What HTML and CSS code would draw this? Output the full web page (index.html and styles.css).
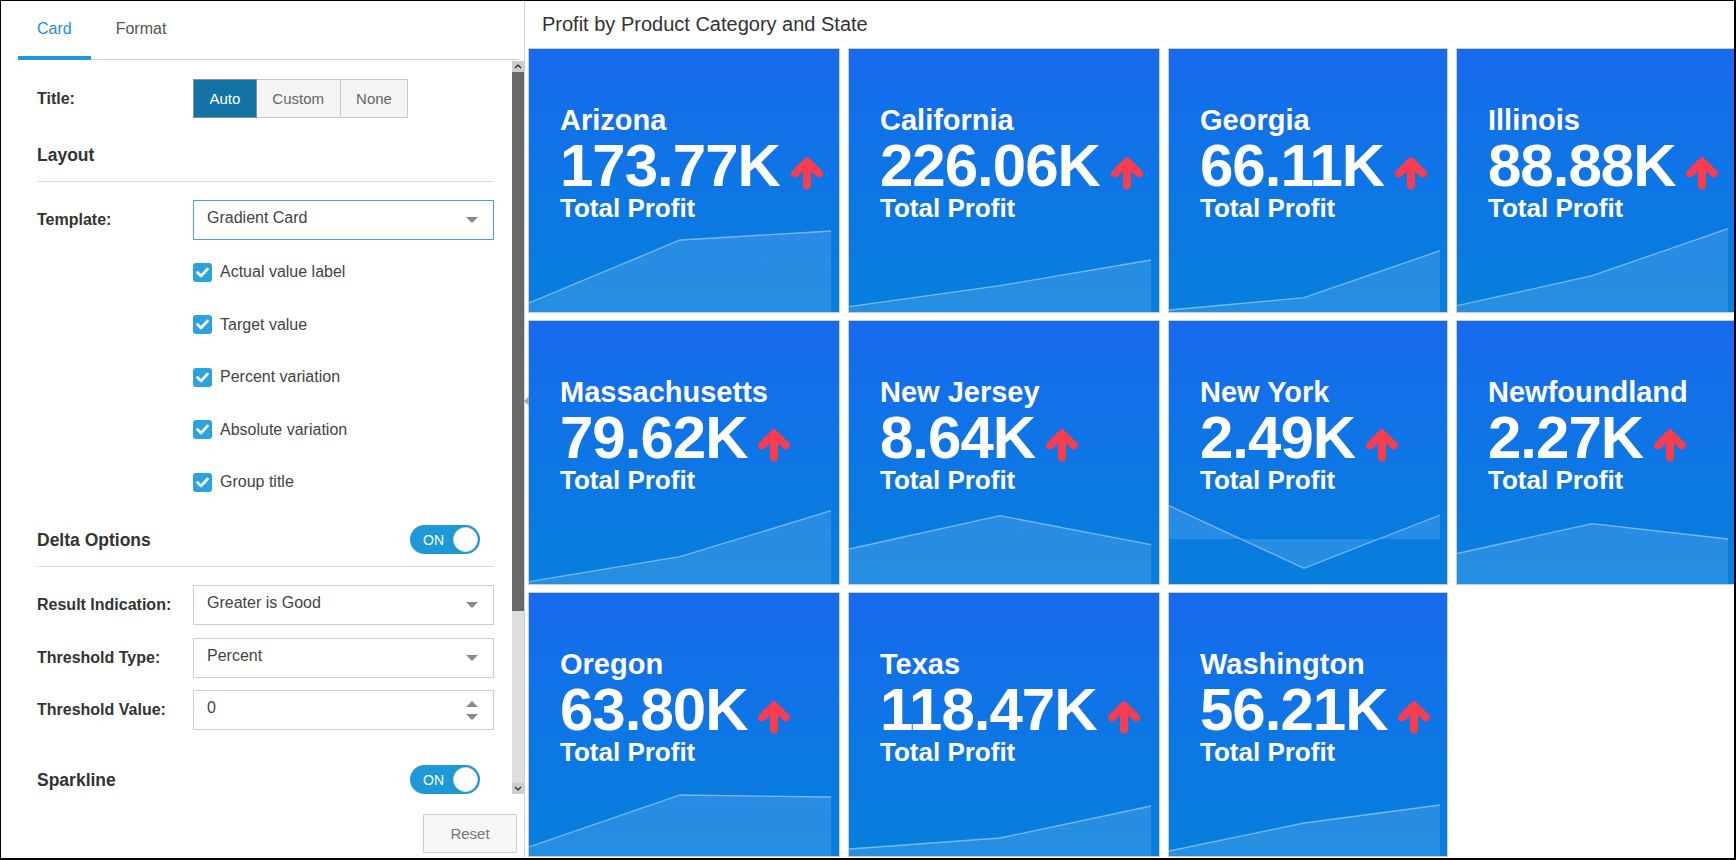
FILE: index.html
```html
<!DOCTYPE html>
<html>
<head>
<meta charset="utf-8">
<title>Card settings</title>
<link rel="stylesheet" href="styles.css">
</head>
<body>
<div class="frame">
  <aside class="panel">
    <nav class="tabs">
      <span class="tab active">Card</span>
      <span class="tab">Format</span>
    </nav>
    <div class="scroller">
      <div class="settings">
        <div class="row title-row">
          <span class="lbl">Title:</span>
          <div class="seg-group"><span class="seg on">Auto</span><span class="seg">Custom</span><span class="seg">None</span></div>
        </div>
        <div class="section-head layout-head"><h3>Layout</h3></div>
        <div class="row template-row">
          <span class="lbl">Template:</span>
          <div class="select focus"><span>Gradient Card</span><i class="caret"></i></div>
        </div>
        <ul class="checks">
          <li><span class="cb"><svg width="13" height="11" viewBox="0 0 13 11"><polyline points="1.5,5.5 5,9 11.5,2" fill="none" stroke="#fff" stroke-width="2.6" stroke-linecap="round" stroke-linejoin="round"/></svg></span>Actual value label</li>
          <li><span class="cb"><svg width="13" height="11" viewBox="0 0 13 11"><polyline points="1.5,5.5 5,9 11.5,2" fill="none" stroke="#fff" stroke-width="2.6" stroke-linecap="round" stroke-linejoin="round"/></svg></span>Target value</li>
          <li><span class="cb"><svg width="13" height="11" viewBox="0 0 13 11"><polyline points="1.5,5.5 5,9 11.5,2" fill="none" stroke="#fff" stroke-width="2.6" stroke-linecap="round" stroke-linejoin="round"/></svg></span>Percent variation</li>
          <li><span class="cb"><svg width="13" height="11" viewBox="0 0 13 11"><polyline points="1.5,5.5 5,9 11.5,2" fill="none" stroke="#fff" stroke-width="2.6" stroke-linecap="round" stroke-linejoin="round"/></svg></span>Absolute variation</li>
          <li><span class="cb"><svg width="13" height="11" viewBox="0 0 13 11"><polyline points="1.5,5.5 5,9 11.5,2" fill="none" stroke="#fff" stroke-width="2.6" stroke-linecap="round" stroke-linejoin="round"/></svg></span>Group title</li>
        </ul>
        <div class="section-head delta-head"><h3>Delta Options</h3><div class="toggle"><span>ON</span><i></i></div></div>
        <div class="row field-row first">
          <span class="lbl">Result Indication:</span>
          <div class="select"><span>Greater is Good</span><i class="caret"></i></div>
        </div>
        <div class="row field-row">
          <span class="lbl">Threshold Type:</span>
          <div class="select"><span>Percent</span><i class="caret"></i></div>
        </div>
        <div class="row field-row">
          <span class="lbl">Threshold Value:</span>
          <div class="select"><span>0</span><span class="spin"><i class="up"></i><i class="caret"></i></span></div>
        </div>
        <div class="section-head spark-head"><h3>Sparkline</h3><div class="toggle"><span>ON</span><i></i></div></div>
      </div>
      <div class="scrollbar">
        <div class="sb-btn"><svg width="8" height="5" viewBox="0 0 8 5"><polyline points="1,4 4,1 7,4" fill="none" stroke="#222" stroke-width="1.2"/></svg></div>
        <div class="sb-thumb"></div>
        <div class="sb-track"></div>
        <div class="sb-btn"><svg width="8" height="5" viewBox="0 0 8 5"><polyline points="1,1 4,4 7,1" fill="none" stroke="#222" stroke-width="1.2"/></svg></div>
      </div>
    </div>
    <div class="panel-foot"><button class="reset">Reset</button></div>
  </aside>
  <span class="splitter-handle"></span>
  <main class="view">
    <h2 class="view-title">Profit by Product Category and State</h2>
    <div class="cards">

      <div class="card">
        <svg class="spark" viewBox="0 0 310 100" preserveAspectRatio="none"><polygon points="0,91 151,28 302,19 302,100 0,100"/><polyline points="0,91 151,28 302,19"/></svg>
        <div class="kpi"><div class="kpi-name">Arizona</div><div class="kpi-value"><b>173.77K</b><svg class="arrow" width="34" height="34" viewBox="0 0 34 34"><path d="M17 28.5V7M5 16.5L17 4.5L29 16.5"/></svg></div><div class="kpi-sub">Total Profit</div></div>
      </div>

      <div class="card">
        <svg class="spark" viewBox="0 0 310 100" preserveAspectRatio="none"><polygon points="0,94.6 151,73.6 302,48 302,100 0,100"/><polyline points="0,94.6 151,73.6 302,48"/></svg>
        <div class="kpi"><div class="kpi-name">California</div><div class="kpi-value"><b>226.06K</b><svg class="arrow" width="34" height="34" viewBox="0 0 34 34"><path d="M17 28.5V7M5 16.5L17 4.5L29 16.5"/></svg></div><div class="kpi-sub">Total Profit</div></div>
      </div>

      <div class="card">
        <svg class="spark" viewBox="0 0 278 100" preserveAspectRatio="none"><polygon points="0,98 135,85.7 271,38.7 271,100 0,100"/><polyline points="0,98 135,85.7 271,38.7"/></svg>
        <div class="kpi"><div class="kpi-name">Georgia</div><div class="kpi-value"><b>66.11K</b><svg class="arrow" width="34" height="34" viewBox="0 0 34 34"><path d="M17 28.5V7M5 16.5L17 4.5L29 16.5"/></svg></div><div class="kpi-sub">Total Profit</div></div>
      </div>

      <div class="card">
        <svg class="spark" viewBox="0 0 278 100" preserveAspectRatio="none"><polygon points="0,93.7 135,63.7 271,16.7 271,100 0,100"/><polyline points="0,93.7 135,63.7 271,16.7"/></svg>
        <div class="kpi"><div class="kpi-name">Illinois</div><div class="kpi-value"><b>88.88K</b><svg class="arrow" width="34" height="34" viewBox="0 0 34 34"><path d="M17 28.5V7M5 16.5L17 4.5L29 16.5"/></svg></div><div class="kpi-sub">Total Profit</div></div>
      </div>

      <div class="card">
        <svg class="spark" viewBox="0 0 310 100" preserveAspectRatio="none"><polygon points="0,97.7 151,72.7 302,26.7 302,100 0,100"/><polyline points="0,97.7 151,72.7 302,26.7"/></svg>
        <div class="kpi"><div class="kpi-name">Massachusetts</div><div class="kpi-value"><b>79.62K</b><svg class="arrow" width="34" height="34" viewBox="0 0 34 34"><path d="M17 28.5V7M5 16.5L17 4.5L29 16.5"/></svg></div><div class="kpi-sub">Total Profit</div></div>
      </div>

      <div class="card">
        <svg class="spark" viewBox="0 0 310 100" preserveAspectRatio="none"><polygon points="0,65 151,31.7 302,60.6 302,100 0,100"/><polyline points="0,65 151,31.7 302,60.6"/></svg>
        <div class="kpi"><div class="kpi-name">New Jersey</div><div class="kpi-value"><b>8.64K</b><svg class="arrow" width="34" height="34" viewBox="0 0 34 34"><path d="M17 28.5V7M5 16.5L17 4.5L29 16.5"/></svg></div><div class="kpi-sub">Total Profit</div></div>
      </div>

      <div class="card">
        <svg class="spark" viewBox="0 0 278 100" preserveAspectRatio="none"><polygon points="0,21.7 135,84.3 271,31 271,55 0,55"/><polyline points="0,21.7 135,84.3 271,31"/></svg>
        <div class="kpi"><div class="kpi-name">New York</div><div class="kpi-value"><b>2.49K</b><svg class="arrow" width="34" height="34" viewBox="0 0 34 34"><path d="M17 28.5V7M5 16.5L17 4.5L29 16.5"/></svg></div><div class="kpi-sub">Total Profit</div></div>
      </div>

      <div class="card">
        <svg class="spark" viewBox="0 0 278 100" preserveAspectRatio="none"><polygon points="0,69.5 135,39.6 271,55 271,100 0,100"/><polyline points="0,69.5 135,39.6 271,55"/></svg>
        <div class="kpi"><div class="kpi-name">Newfoundland</div><div class="kpi-value"><b>2.27K</b><svg class="arrow" width="34" height="34" viewBox="0 0 34 34"><path d="M17 28.5V7M5 16.5L17 4.5L29 16.5"/></svg></div><div class="kpi-sub">Total Profit</div></div>
      </div>

      <div class="card">
        <svg class="spark" viewBox="0 0 310 100" preserveAspectRatio="none"><polygon points="0,91 151,39 302,41 302,100 0,100"/><polyline points="0,91 151,39 302,41"/></svg>
        <div class="kpi"><div class="kpi-name">Oregon</div><div class="kpi-value"><b>63.80K</b><svg class="arrow" width="34" height="34" viewBox="0 0 34 34"><path d="M17 28.5V7M5 16.5L17 4.5L29 16.5"/></svg></div><div class="kpi-sub">Total Profit</div></div>
      </div>

      <div class="card">
        <svg class="spark" viewBox="0 0 310 100" preserveAspectRatio="none"><polygon points="0,93 151,82 302,50 302,100 0,100"/><polyline points="0,93 151,82 302,50"/></svg>
        <div class="kpi"><div class="kpi-name">Texas</div><div class="kpi-value"><b>118.47K</b><svg class="arrow" width="34" height="34" viewBox="0 0 34 34"><path d="M17 28.5V7M5 16.5L17 4.5L29 16.5"/></svg></div><div class="kpi-sub">Total Profit</div></div>
      </div>

      <div class="card">
        <svg class="spark" viewBox="0 0 278 100" preserveAspectRatio="none"><polygon points="0,95 135,67 271,49 271,100 0,100"/><polyline points="0,95 135,67 271,49"/></svg>
        <div class="kpi"><div class="kpi-name">Washington</div><div class="kpi-value"><b>56.21K</b><svg class="arrow" width="34" height="34" viewBox="0 0 34 34"><path d="M17 28.5V7M5 16.5L17 4.5L29 16.5"/></svg></div><div class="kpi-sub">Total Profit</div></div>
      </div>

    </div>
  </main>
</div>
</body>
</html>
```

FILE: styles.css
```css
* { box-sizing: border-box; }
html, body { margin: 0; padding: 0; background: #fff; }
body { font-family: "Liberation Sans", Arial, sans-serif; color: #333; }

.frame {
  position: relative;
  width: 1736px;
  height: 860px;
  border: 1px solid #000;
  border-right-width: 2px;
  border-bottom-width: 2px;
  display: flex;
  overflow: hidden;
  background: #fff;
}

/* ---------- left settings panel ---------- */
.panel {
  width: 524px;
  flex: none;
  border-right: 1px solid #cfcfcf;
  display: flex;
  flex-direction: column;
}
.tabs {
  display: flex;
  height: 59px;
  margin: 0 5px 0 17px;
  border-bottom: 1px solid #cdcdcd;
}
.tab {
  height: 59px;
  line-height: 55px;
  padding: 0 19px;
  font-size: 16px;
  color: #555;
  border-bottom: 4px solid transparent;
}
.tab.active { color: #1f8dcc; border-bottom-color: #1a9be0; }
.tab + .tab { margin-left: 6px; }

.scroller { height: 734px; display: flex; overflow: hidden; flex: none; }
.settings { flex: 1; min-width: 0; padding: 0 18px 0 36px; overflow: hidden; }

.scrollbar { width: 12px; flex: none; margin-top: 1px; display: flex; flex-direction: column; }
.sb-btn { height: 11px; background: #cdcdcd; display: flex; align-items: center; justify-content: center; }
.sb-btn svg { display: block; }
.sb-thumb { height: 539px; background: #696969; }
.sb-track { flex: 1; background: #dedede; }

.row { display: flex; align-items: center; }
.lbl { width: 156px; flex: none; font-size: 16px; font-weight: bold; color: #333; white-space: nowrap; }

.title-row { margin-top: 19px; }
.seg-group { display: flex; }
.seg {
  height: 39px;
  line-height: 37px;
  padding: 0 15.5px;
  font-size: 15px;
  color: #666;
  background: #f4f4f4;
  border: 1px solid #c9c9c9;
}
.seg + .seg { border-left: none; }
.seg.on { background: #1273a7; border-color: #8c8c8c; color: #fff; }

.section-head {
  display: flex;
  align-items: center;
  justify-content: space-between;
}
.section-head h3 { margin: 0; font-size: 17.5px; font-weight: bold; line-height: 24px; color: #333; }
.layout-head { margin-top: 25px; padding-bottom: 14px; border-bottom: 1px solid #dcdcdc; }
.delta-head { margin-top: 16.5px; padding-bottom: 12px; border-bottom: 1px solid #dcdcdc; }
.spark-head { margin-top: 35px; }

.template-row { margin-top: 18px; }
.field-row { margin-top: 12.5px; }
.field-row.first { margin-top: 18px; }

.select {
  flex: 1;
  height: 40px;
  border: 1px solid #cfcfcf;
  padding: 0 15px 0 13px;
  font-size: 16px;
  color: #444;
  display: flex;
  align-items: center;
  justify-content: space-between;
}
.select > span:first-child { margin-top: -4px; }
.select.focus { border-color: #3ba7e3; }
.caret {
  display: block;
  width: 0;
  height: 0;
  border-left: 6px solid transparent;
  border-right: 6px solid transparent;
  border-top: 6px solid #8a8a8a;
}
.spin { display: flex; flex-direction: column; gap: 7px; }
.spin .up {
  display: block;
  width: 0;
  height: 0;
  border-left: 6px solid transparent;
  border-right: 6px solid transparent;
  border-bottom: 6px solid #8a8a8a;
}

.checks { list-style: none; margin: 6px 0 0 156px; padding: 0; }
.checks li { height: 52.5px; display: flex; align-items: center; font-size: 16px; color: #444; }
.cb {
  width: 19px;
  height: 19px;
  border-radius: 3px;
  background: #2ba3df;
  margin-right: 8px;
  display: flex;
  align-items: center;
  justify-content: center;
}
.cb svg { display: block; }

.toggle {
  width: 70px;
  height: 29px;
  border-radius: 15px;
  background: #1b9ad7;
  margin-right: 14px;
  display: flex;
  align-items: center;
  justify-content: space-between;
  padding: 0 2px 0 13px;
  color: #fff;
  font-size: 14px;
}
.toggle i { display: block; width: 25px; height: 25px; border-radius: 50%; background: #fff; border: 1px solid #dcdcdc; }

.panel-foot { flex: 1; display: flex; justify-content: flex-end; align-items: flex-start; padding: 20px 7px 0 0; }
.reset {
  width: 94px;
  height: 39px;
  border: 1px solid #cfcfcf;
  background: #f6f6f6;
  color: #777;
  font-family: "Liberation Sans", Arial, sans-serif;
  font-size: 15px;
  padding: 0;
}

.splitter-handle {
  position: absolute;
  left: 523px;
  top: 395px;
  width: 0;
  height: 0;
  border-top: 5px solid transparent;
  border-bottom: 5px solid transparent;
  border-right: 5px solid #a8a8a8;
}

/* ---------- right view ---------- */
.view { flex: 1; min-width: 0; padding-left: 3px; overflow: hidden; }
.view-title {
  margin: 0;
  height: 47px;
  line-height: 47px;
  padding-left: 14px;
  font-size: 20px;
  font-weight: normal;
  color: #333;
  white-space: nowrap;
}
.cards {
  display: grid;
  grid-template-columns: 312px 312px 280px 280px;
  grid-auto-rows: 265px;
  column-gap: 8px;
  row-gap: 7px;
}
.card {
  display: grid;
  border: 1px solid #cdcdcd;
  background: linear-gradient(180deg, #176aed 0%, #0c78e3 60%, #067fdd 100%);
  color: #fff;
  overflow: hidden;
}
.card > * { grid-area: 1 / 1; }
.spark { align-self: end; display: block; width: 100%; height: 100px; }
.spark polygon { fill: rgba(255, 255, 255, 0.13); }
.spark polyline { fill: none; stroke: rgba(255, 255, 255, 0.42); stroke-width: 1.3; }

.kpi { padding: 55px 0 0 31px; font-weight: bold; white-space: nowrap; }
.kpi-name { font-size: 29px; line-height: 32px; }
.kpi-value { display: flex; align-items: flex-start; margin-top: 4px; }
.kpi-value b { font-size: 60px; line-height: 52px; letter-spacing: -1px; }
.arrow { display: block; flex: none; margin: 16.5px 0 0 10px; }
.arrow path { fill: none; stroke: #f83e4e; stroke-width: 8; stroke-linecap: round; stroke-linejoin: round; }
.kpi-sub { font-size: 26px; line-height: 30px; margin-top: 1px; }
```
